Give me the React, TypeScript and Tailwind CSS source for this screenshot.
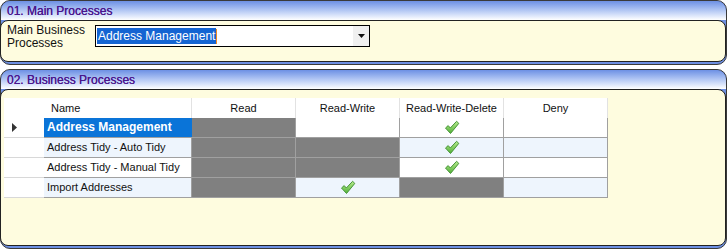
import React from 'react';

type Cell = 'off' | 'blank' | 'check';

interface Row {
  name: string;
  cells: Cell[];
  selected?: boolean;
}

const rows: Row[] = [
  { name: 'Address Management', cells: ['off', 'blank', 'check', 'blank'], selected: true },
  { name: 'Address Tidy - Auto Tidy', cells: ['off', 'off', 'check', 'blank'] },
  { name: 'Address Tidy - Manual Tidy', cells: ['off', 'off', 'check', 'blank'] },
  { name: 'Import Addresses', cells: ['off', 'check', 'off', 'blank'] },
];

const columns = ['Read', 'Read-Write', 'Read-Write-Delete', 'Deny'];

function Check() {
  return (
    <svg width="16" height="15" viewBox="0 0 16 15">
      <defs>
        <linearGradient id="chk" x1="0" y1="0" x2="0" y2="1">
          <stop offset="0" stopColor="#b8ec8e" />
          <stop offset="1" stopColor="#52b038" />
        </linearGradient>
      </defs>
      <path
        d="M1.5 8 L4.2 5.6 L6.3 8 L12.6 1.3 L14.8 3.4 L6.5 13.5 Z"
        fill="url(#chk)"
        stroke="#47953a"
        strokeWidth="1"
        strokeLinejoin="round"
      />
    </svg>
  );
}

function Panel({ title, children, bodyClass }: { title: string; children: React.ReactNode; bodyClass: string }) {
  return (
    <div className="rounded-[10px] border border-[#3a3a3a] bg-[#6d8fe2] pb-[2px]">
      <div className="h-[19px] rounded-t-[10px] bg-gradient-to-b from-[#6d90e4] to-[#ffffff] pl-[6px] pt-[1px] text-[12px] leading-[18px] text-[#4a168c] [text-shadow:0_0_0.4px_#4a168c]">
        {title}
      </div>
      <div className={`-ml-px rounded-[8px] border border-[#222] bg-[#fefcdf] ${bodyClass}`}>{children}</div>
    </div>
  );
}

export default function App() {
  return (
    <div className="h-[250px] w-[727px] overflow-hidden bg-white" style={{ fontFamily: '"Liberation Sans", Arial, sans-serif' }}>
      <Panel title="01. Main Processes" bodyClass="h-[42px]">
        <div className="flex items-start pl-[6px] pt-[3px]">
          <div className="w-[88px] text-[12px] leading-[13px] text-[#111]">
            Main Business
            <br />
            Processes
          </div>
          <div className="mt-[1px] flex h-[22px] w-[275px] items-center border border-black bg-white pl-[1px]">
            <div className="flex h-[16px] flex-1 items-center">
              <span className="bg-[#1464d2] px-[1px] text-[12px] leading-[16px] text-white">Address Management</span>
              <span className="h-[15px] w-px bg-[#f08a20]" />
            </div>
            <div className="flex h-full w-[16px] items-center justify-center bg-[#f0f0f0]">
              <svg width="7" height="4" viewBox="0 0 7 4">
                <path d="M0 0 H7 L3.5 4 Z" fill="#111" />
              </svg>
            </div>
          </div>
        </div>
      </Panel>

      <div className="h-[4px]" />

      <Panel title="02. Business Processes" bodyClass="h-[157px]">
        <div className="pl-[3px] pt-[8px]">
          <div className="flex h-[20px] text-[11px] leading-[20px] text-[#111]">
            <div className="w-[40px] bg-white" />
            <div className="w-[148px] border-r border-[#e2e2e2] bg-white pl-[7px]">Name</div>
            {columns.map((c) => (
              <div key={c} className="w-[104px] border-r border-[#e2e2e2] bg-white text-center">
                {c}
              </div>
            ))}
          </div>
          {rows.map((r, i) => {
            const alt = i % 2 === 1;
            return (
              <div key={r.name} className="flex h-[20px] text-[11px] leading-[19px] text-[#111]">
                <div className="flex w-[40px] items-center border-b border-[#d8d8d8] bg-white pl-[8px]">
                  {r.selected && (
                    <svg width="5" height="9" viewBox="0 0 5 9">
                      <path d="M0 0 L5 4.5 L0 9 Z" fill="#333" />
                    </svg>
                  )}
                </div>
                <div
                  className={
                    r.selected
                      ? 'w-[148px] border-b border-[#a0a0a0] bg-[#0a74d8] pl-[3px] text-[12px] font-bold text-white'
                      : `w-[148px] border-r border-b border-[#a0a0a0] pl-[3px] ${alt ? 'bg-[#eef5fd]' : 'bg-white'}`
                  }
                >
                  {r.name}
                </div>
                {r.cells.map((c, j) => (
                  <div
                    key={j}
                    className={`flex w-[104px] items-center justify-center border-r border-b border-[#a0a0a0] ${
                      c === 'off' ? 'bg-[#808080]' : alt ? 'bg-[#eef5fd]' : 'bg-white'
                    }`}
                  >
                    {c === 'check' && <Check />}
                  </div>
                ))}
              </div>
            );
          })}
        </div>
      </Panel>
    </div>
  );
}
